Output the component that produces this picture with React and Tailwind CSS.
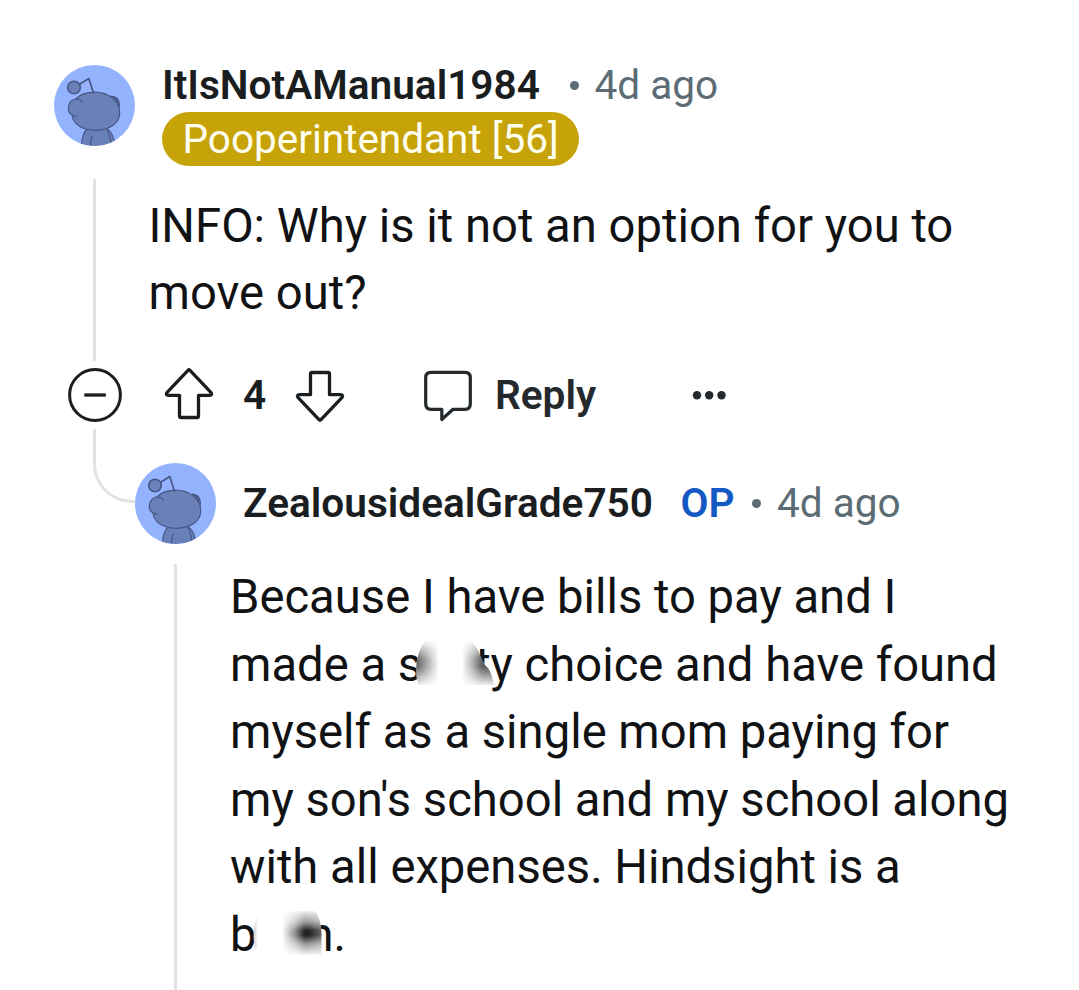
function Avatar() {
  return (
    <svg className="block size-[81px] shrink-0" viewBox="0 0 81 81" fill="none">
      <defs>
        <clipPath id="disc">
          <circle cx="40.5" cy="40.5" r="40.5" />
        </clipPath>
      </defs>
      <g clipPath="url(#disc)">
        <rect width="81" height="81" fill="#94b3ff" />
        <g fill="#6980b8" stroke="#475685" strokeWidth="1.2" strokeLinecap="round" strokeLinejoin="round">
          <path d="M57 31.500C62 30.500 66 35 65.300 42" />
          <path d="M27.500 82C27.500 74 29.500 67 33.500 63.500H53C58 67 60.500 75 61 82Z" />
          <path d="M36.500 82C36.500 77 37 73.500 38.300 71M53 65C56 70 57 76 57.300 82" fill="none" />
          <path d="M28.500 37C24.500 33 17 33.800 15 39.500C13.500 44 15 48 18 49.800C18.500 59 28.500 65.300 41.500 65.300C55 65.300 65.700 58.500 65.700 48C65.700 36 54.500 27.200 41 27.200C32.500 27.200 26 29.500 21.500 34Z" stroke="none" />
          <path d="M28.500 37C27.500 35.500 25 34 21.500 34C17.500 34.500 14.300 38 14.300 43C14.300 47 16 49 18 49.800C18.500 59 28.500 65.300 41.500 65.300C55 65.300 65.700 58.500 65.700 48C65.700 36 54.500 27.200 41 27.200C32.500 27.200 26 29.500 21.500 34M18 49.800C19.500 51 21 51.200 22.500 50.800" fill="none" />
          <path d="M57.500 31C62 33.500 64 36.500 64.600 41" fill="none" />
          <path d="M26 19L34.800 13.500L39.500 28" fill="none" strokeWidth="1.700" />
          <circle cx="20" cy="22.500" r="6.300" strokeWidth="1.600" />
        </g>
      </g>
    </svg>
  );
}

function ArrowIcon({ down }) {
  return (
    <svg
      className={down ? "block size-[54px] rotate-180" : "block size-[54px]"}
      viewBox="0 0 54 54"
      fill="none"
      stroke="#1a1e21"
      strokeWidth="3.3"
      strokeLinejoin="round"
    >
      <path d="M26 2.300Q27 1.300 28 2.300L48.900 24.400Q50.700 27.300 47.500 27.300H36.500V48Q36.500 49.500 35 49.500H19Q17.500 49.500 17.500 48V27.300H6.500Q3.300 27.300 5.100 24.400Z" />
    </svg>
  );
}

function Actions() {
  return (
    <div className="flex h-[68px] items-center">
      <svg className="ml-[68px] block size-[54px]" viewBox="0 0 54 54" fill="none" stroke="#1a1e21" strokeWidth="3">
        <circle cx="27" cy="27" r="25.400" />
        <path d="M16.300 27H37.800" strokeWidth="3.300" />
      </svg>
      <div className="ml-[40px] flex items-center">
        <ArrowIcon />
        <span className="w-[77px] text-center text-[40.600px] font-semibold leading-[54px] text-[#1a1e21]">4</span>
        <ArrowIcon down />
      </div>
      <div className="ml-[76px] flex items-center text-[#23292c]">
        <svg className="block h-[54px] w-[50px]" viewBox="0 0 50 54" fill="none" stroke="currentColor" strokeWidth="3.200" strokeLinejoin="round">
          <path d="M8 4.400H42Q47.300 4.400 47.300 9.700V36Q47.300 41.300 42 41.300H30L18.800 51.500V41.300H8Q2.700 41.300 2.700 36V9.700Q2.700 4.400 8 4.400Z" />
        </svg>
        <span className="ml-[22px] w-[101px] whitespace-nowrap text-[40.600px] font-semibold leading-[54px]">Reply</span>
      </div>
      <svg className="ml-[96px] block h-[10px] w-[34px]" viewBox="0 0 34 10" fill="#23292c">
        <circle cx="5" cy="5.200" r="4.200" />
        <circle cx="17.200" cy="5.200" r="4.200" />
        <circle cx="29.500" cy="5.200" r="4.200" />
      </svg>
    </div>
  );
}

function Smudges() {
  return (
    <span className="relative inline-block h-[44px] w-[53px] align-baseline">
      <svg className="absolute left-[-7px] top-[4px] h-[44px] w-[84px]" viewBox="0 0 84 44">
        <defs>
          <linearGradient id="fadeRight">
            <stop offset="0" stopColor="#606060" />
            <stop offset=".5" stopColor="#606060" stopOpacity=".5" />
            <stop offset="1" stopColor="#606060" stopOpacity="0" />
          </linearGradient>
          <linearGradient id="fadeLeft" gradientUnits="userSpaceOnUse" x1="47" y1="0" x2="80" y2="0">
            <stop offset="0" stopColor="#505050" stopOpacity="0" />
            <stop offset=".3" stopColor="#505050" stopOpacity=".4" />
            <stop offset=".6" stopColor="#505050" stopOpacity=".9" />
            <stop offset="1" stopColor="#505050" />
          </linearGradient>
          <linearGradient id="fadeEnds" x1="0" y1="0" x2="0" y2="1">
            <stop offset="0" stopColor="#fff" stopOpacity=".1" />
            <stop offset=".25" stopColor="#fff" stopOpacity=".65" />
            <stop offset=".42" stopColor="#fff" />
            <stop offset=".58" stopColor="#fff" />
            <stop offset=".75" stopColor="#fff" stopOpacity=".65" />
            <stop offset="1" stopColor="#fff" stopOpacity=".1" />
          </linearGradient>
          <mask id="softEnds" maskUnits="userSpaceOnUse" x="0" y="0" width="84" height="44">
            <rect width="84" height="44" fill="url(#fadeEnds)" />
          </mask>
        </defs>
        <path d="M10 0H55Q62 5 65 14Q68 23 73 27Q77 33 79 44H3Q-3 18 10 0Z" fill="#fff" />
        <g mask="url(#softEnds)">
          <path d="M10 0H24V44H3Q-3 18 10 0Z" fill="url(#fadeRight)" />
          <path d="M47 0H55Q62 5 65 14Q68 23 73 27Q77 33 79 44H47Z" fill="url(#fadeLeft)" />
        </g>
      </svg>
    </span>
  );
}

function DarkSmudge() {
  return (
    <span className="relative inline-block h-[44px] w-[51px] align-baseline">
      <svg className="absolute left-[-4px] top-[4px] h-[44px] w-[69px]" viewBox="0 0 69 44">
        <defs>
          <linearGradient id="darkAcross" gradientUnits="userSpaceOnUse" x1="30" y1="0" x2="69" y2="0">
            <stop offset="0" stopColor="#0a0a0a" stopOpacity=".04" />
            <stop offset=".3" stopColor="#0a0a0a" stopOpacity=".45" />
            <stop offset=".55" stopColor="#0a0a0a" stopOpacity=".95" />
            <stop offset=".66" stopColor="#0a0a0a" stopOpacity=".95" />
            <stop offset="1" stopColor="#0a0a0a" stopOpacity=".65" />
          </linearGradient>
          <linearGradient id="darkDown" x1="0" y1="0" x2="0" y2="1">
            <stop offset="0" stopColor="#fff" stopOpacity=".06" />
            <stop offset=".25" stopColor="#fff" stopOpacity=".42" />
            <stop offset=".45" stopColor="#fff" stopOpacity=".95" />
            <stop offset=".55" stopColor="#fff" stopOpacity=".95" />
            <stop offset=".75" stopColor="#fff" stopOpacity=".42" />
            <stop offset="1" stopColor="#fff" stopOpacity=".03" />
          </linearGradient>
          <mask id="darkEnds" maskUnits="userSpaceOnUse" x="0" y="0" width="69" height="44">
            <rect width="69" height="44" fill="url(#darkDown)" />
          </mask>
          <linearGradient id="faint">
            <stop offset="0" stopColor="#ccc" />
            <stop offset="1" stopColor="#fff" />
          </linearGradient>
        </defs>
        <path d="M5 0H62Q68 8 68.500 22V44H3Q-2 18 5 0Z" fill="#fff" />
        <path d="M5 3Q-2 20 2 38H5Z" fill="url(#faint)" />
        <path d="M30 0H62Q68 8 68.500 22V44H30Z" fill="url(#darkAcross)" mask="url(#darkEnds)" />
      </svg>
    </span>
  );
}

export default function App() {
  return (
    <main className="flex h-[990px] w-[1079px] flex-col overflow-hidden bg-white pt-[58px] font-['Roboto',sans-serif] text-[#101214]">
      <article className="flex h-[303px]">
        <div className="ml-[54px] flex w-[81px] flex-col items-center pt-[7px]">
          <Avatar />
          <div className="mt-[33px] w-[3px] flex-1 bg-[#e2e2e2]" />
        </div>
        <div className="ml-[13.500px]">
          <header className="pl-[13.500px]">
            <div className="flex h-[54px] items-center whitespace-nowrap text-[40.600px] leading-[54px]">
              <h2 className="w-[378px] font-semibold text-[#1a1e21]">ItIsNotAManual1984</h2>
              <i className="ml-[29.500px] size-[9px] rounded-full bg-[#5c6c74]" />
              <time className="ml-[16px] text-[#5c6c74]">4d ago</time>
            </div>
            <div className="h-[54px] w-[417px] whitespace-nowrap rounded-full bg-[#c7a30a] pl-[20.500px] text-[40.500px] leading-[54px] text-[#fffff0]">
              Pooperintendant [56]
            </div>
          </header>
          <p className="mt-[27px] whitespace-nowrap text-[47.230px] leading-[67px]">
            INFO: Why is it not an option for you to
            <br />
            move out?
          </p>
        </div>
      </article>
      <Actions />
      <article className="flex flex-1">
        <div className="ml-[93px] h-[74px] w-[42px] rounded-bl-[39px] border-b-[3px] border-l-[3px] border-[#e2e2e2]" />
        <div className="flex w-[81px] flex-col items-center pt-[34px]">
          <Avatar />
          <div className="mt-[20px] w-[3px] flex-1 bg-[#e2e2e2]" />
        </div>
        <div className="ml-[14px] pt-[47px]">
          <header className="flex h-[54px] items-center whitespace-nowrap pl-[13px] text-[40.600px] leading-[54px]">
            <h2 className="w-[409px] font-semibold text-[#1a1e21]">ZealousidealGrade750</h2>
            <span className="ml-[28.500px] w-[54px] font-semibold text-[#1458c4]">OP</span>
            <i className="ml-[17.500px] size-[9px] rounded-full bg-[#5c6c74]" />
            <time className="ml-[16px] text-[#5c6c74]">4d ago</time>
          </header>
          <div className="mt-[34.100px] whitespace-nowrap text-[47.200px] leading-[67.500px]">
            <p className="h-[67.500px]">Because I have bills to pay and I</p>
            <p className="h-[67.500px]">made a s<Smudges />ty choice and have found</p>
            <p className="h-[67.500px]">myself as a single mom paying for</p>
            <p className="h-[67.500px]">my son's school and my school along</p>
            <p className="h-[67.500px]">with all expenses. Hindsight is a</p>
            <p className="h-[67.500px]">b<DarkSmudge />n.</p>
          </div>
        </div>
      </article>
    </main>
  );
}
